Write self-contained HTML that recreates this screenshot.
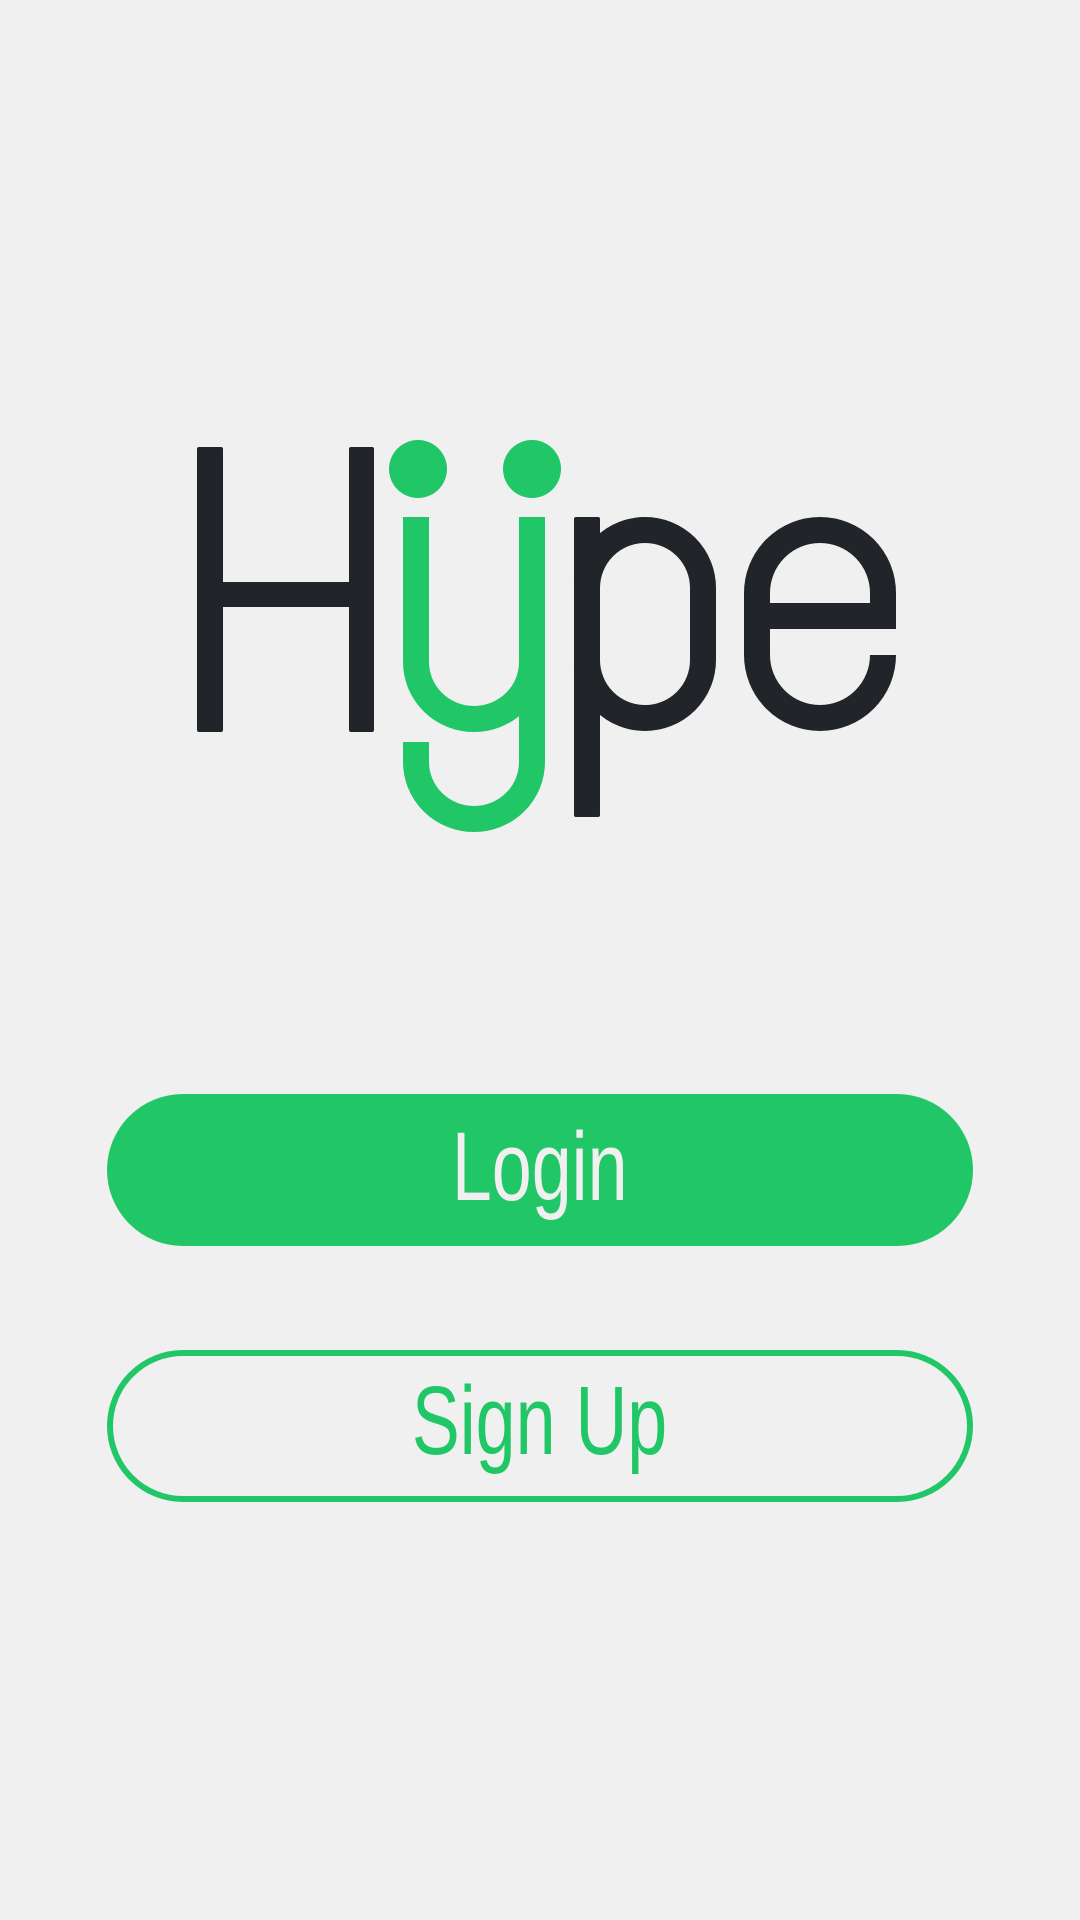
<!DOCTYPE html>
<html><head><meta charset="utf-8"><style>
html,body{margin:0;padding:0;background:#f0f0f0;}
body{width:1080px;height:1920px;position:relative;overflow:hidden;font-family:"Liberation Sans",sans-serif;}
.btn{position:absolute;left:107px;width:866px;height:152px;border-radius:76px;box-sizing:border-box;}
.t{position:absolute;left:0;right:0;text-align:center;font-size:97px;font-weight:300;line-height:1;}
.t span{display:inline-block;transform:scaleX(0.74);}
</style></head><body>
<svg width="1080" height="1920" style="position:absolute;left:0;top:0">
<g fill="#212428">
<rect x="197" y="447" width="26" height="285" rx="2"/>
<rect x="349" y="447" width="25" height="285" rx="2"/>
<rect x="210" y="582" width="150" height="25"/>
<rect x="574" y="517" width="26" height="300" rx="2"/>
</g>
<rect x="587" y="530" width="116" height="188" rx="58" ry="58" fill="none" stroke="#212428" stroke-width="26"/>
<path d="M757 616 H883 V593 A63 63 0 0 0 757 593 V655 A63 63 0 0 0 883 655" fill="none" stroke="#212428" stroke-width="26"/>
<g fill="none" stroke="#21c667" stroke-width="26">
<path d="M416 517 V662 A58 57 0 0 0 532 662"/>
<path d="M532 517 V762 A58 57 0 0 1 416 762 V742"/>
</g>
<g fill="#21c667">
<ellipse cx="418" cy="469" rx="29" ry="29"/>
<ellipse cx="532" cy="469" rx="29" ry="29"/>
</g>
</svg>
<div class="btn" style="top:1094px;background:#21c667;"></div>
<div class="t" style="top:1118px;color:#f0f0f0;"><span>Login</span></div>
<div class="btn" style="top:1350px;height:152px;border:6px solid #21c667;"></div>
<div class="t" style="top:1372px;color:#21c667;"><span>Sign Up</span></div>
</body></html>
